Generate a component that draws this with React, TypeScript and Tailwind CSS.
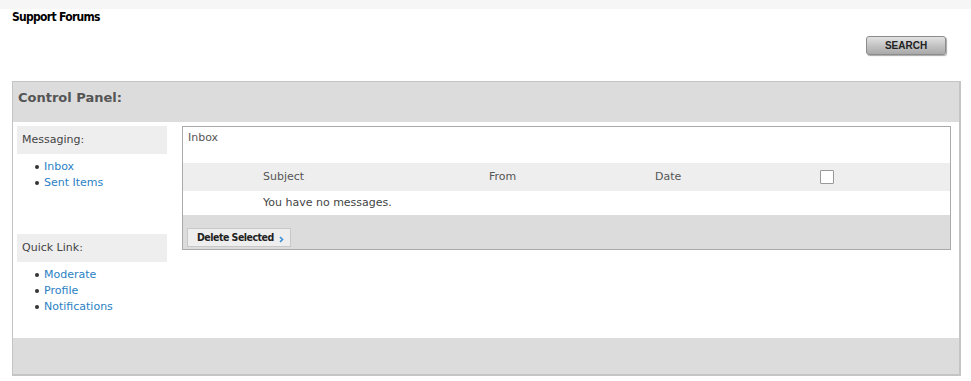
import React from 'react';

const font = { fontFamily: '"DejaVu Sans", Verdana, sans-serif' };
const condensed = { fontFamily: '"DejaVu Sans Condensed", "DejaVu Sans", sans-serif' };

const SideList = ({ items }: { items: string[] }) => (
  <ul className="mt-[5px] pl-[18px]">
    {items.map((it) => (
      <li key={it} className="flex items-center h-[16px]">
        <span className="w-[4px] h-[4px] rounded-full bg-[#333] mr-[5px]" />
        <a href="#" className="text-[#2a7fc4] text-[11px] leading-[16px]">{it}</a>
      </li>
    ))}
  </ul>
);

export default function App() {
  return (
    <div className="w-[971px] h-[381px] bg-white text-[#333] overflow-hidden" style={font}>
      <div className="h-[9px] bg-[#f6f6f6]" />
      <div className="px-[12px] pt-[1px] h-[14px] text-[12px] font-bold text-black leading-[14px] tracking-[-0.7px]" style={condensed}>
        Support Forums
      </div>

      <div className="flex justify-end pr-[25px] mt-[13px]">
        <button className="w-[80px] h-[19px] rounded-[3px] border border-[#8c8c8c] bg-gradient-to-b from-[#e2e2e2] via-[#c4c4c4] to-[#a9a9a9] shadow-[1px_1px_1px_rgba(0,0,0,0.35)] text-[10px] font-bold text-[#222] leading-none" style={{ fontFamily: '"Liberation Sans", Arial, sans-serif' }}>
          SEARCH
        </button>
      </div>

      <div className="mx-[12px] mt-[26px] w-[949px] h-[295px] border border-[#c4c4c4] border-r-2 border-b-2 flex flex-col">
        <div className="h-[40px] bg-[#dcdcdc] px-[5px] pt-[8px] text-[13px] font-bold text-[#555] leading-[16px]">
          Control Panel:
        </div>
        <div className="flex-1 flex bg-white px-[4px] pt-[4px]">
          <div className="w-[150px] flex flex-col">
            <div className="h-[28px] bg-[#eeeeee] px-[5px] flex items-center text-[11px] text-[#444]">Messaging:</div>
            <SideList items={['Inbox', 'Sent Items']} />
            <div className="h-[28px] bg-[#eeeeee] px-[5px] flex items-center text-[11px] text-[#444] mt-[43px]">Quick Link:</div>
            <SideList items={['Moderate', 'Profile', 'Notifications']} />
          </div>
          <div className="ml-[15px] w-[769px] h-[124px] border border-[#aaaaaa] flex flex-col self-start">
            <div className="h-[36px] px-[5px] pt-[3px] text-[11px] text-[#555] leading-[16px]">Inbox</div>
            <div className="h-[28px] bg-[#eeeeee] grid grid-cols-[80px_226px_166px_165px_1fr] items-center text-[11px] text-[#555]">
              <span />
              <span>Subject</span>
              <span>From</span>
              <span>Date</span>
              <span className="w-[14px] h-[14px] border border-[#999] bg-white rounded-[1px]" />
            </div>
            <div className="h-[24px] flex items-center pl-[80px] text-[11px] text-[#444]">You have no messages.</div>
            <div className="flex-1 bg-[#dcdcdc] px-[4px] pt-[13px]">
              <button className="h-[19px] pl-[9px] pr-[6px] bg-[#eeeeee] border border-[#c8c8c8] text-[10.5px] font-bold text-[#222] tracking-[-0.5px] flex items-center gap-[5px]" style={condensed}>
                Delete Selected
                <svg width="5" height="7" viewBox="0 0 5 7" className="mt-[4px]">
                  <path d="M1 1 L3.5 3.5 L1 6" stroke="#3b8fd6" strokeWidth="1.6" fill="none" />
                </svg>
              </button>
            </div>
          </div>
        </div>
        <div className="h-[36px] bg-[#dcdcdc]" />
      </div>
    </div>
  );
}
